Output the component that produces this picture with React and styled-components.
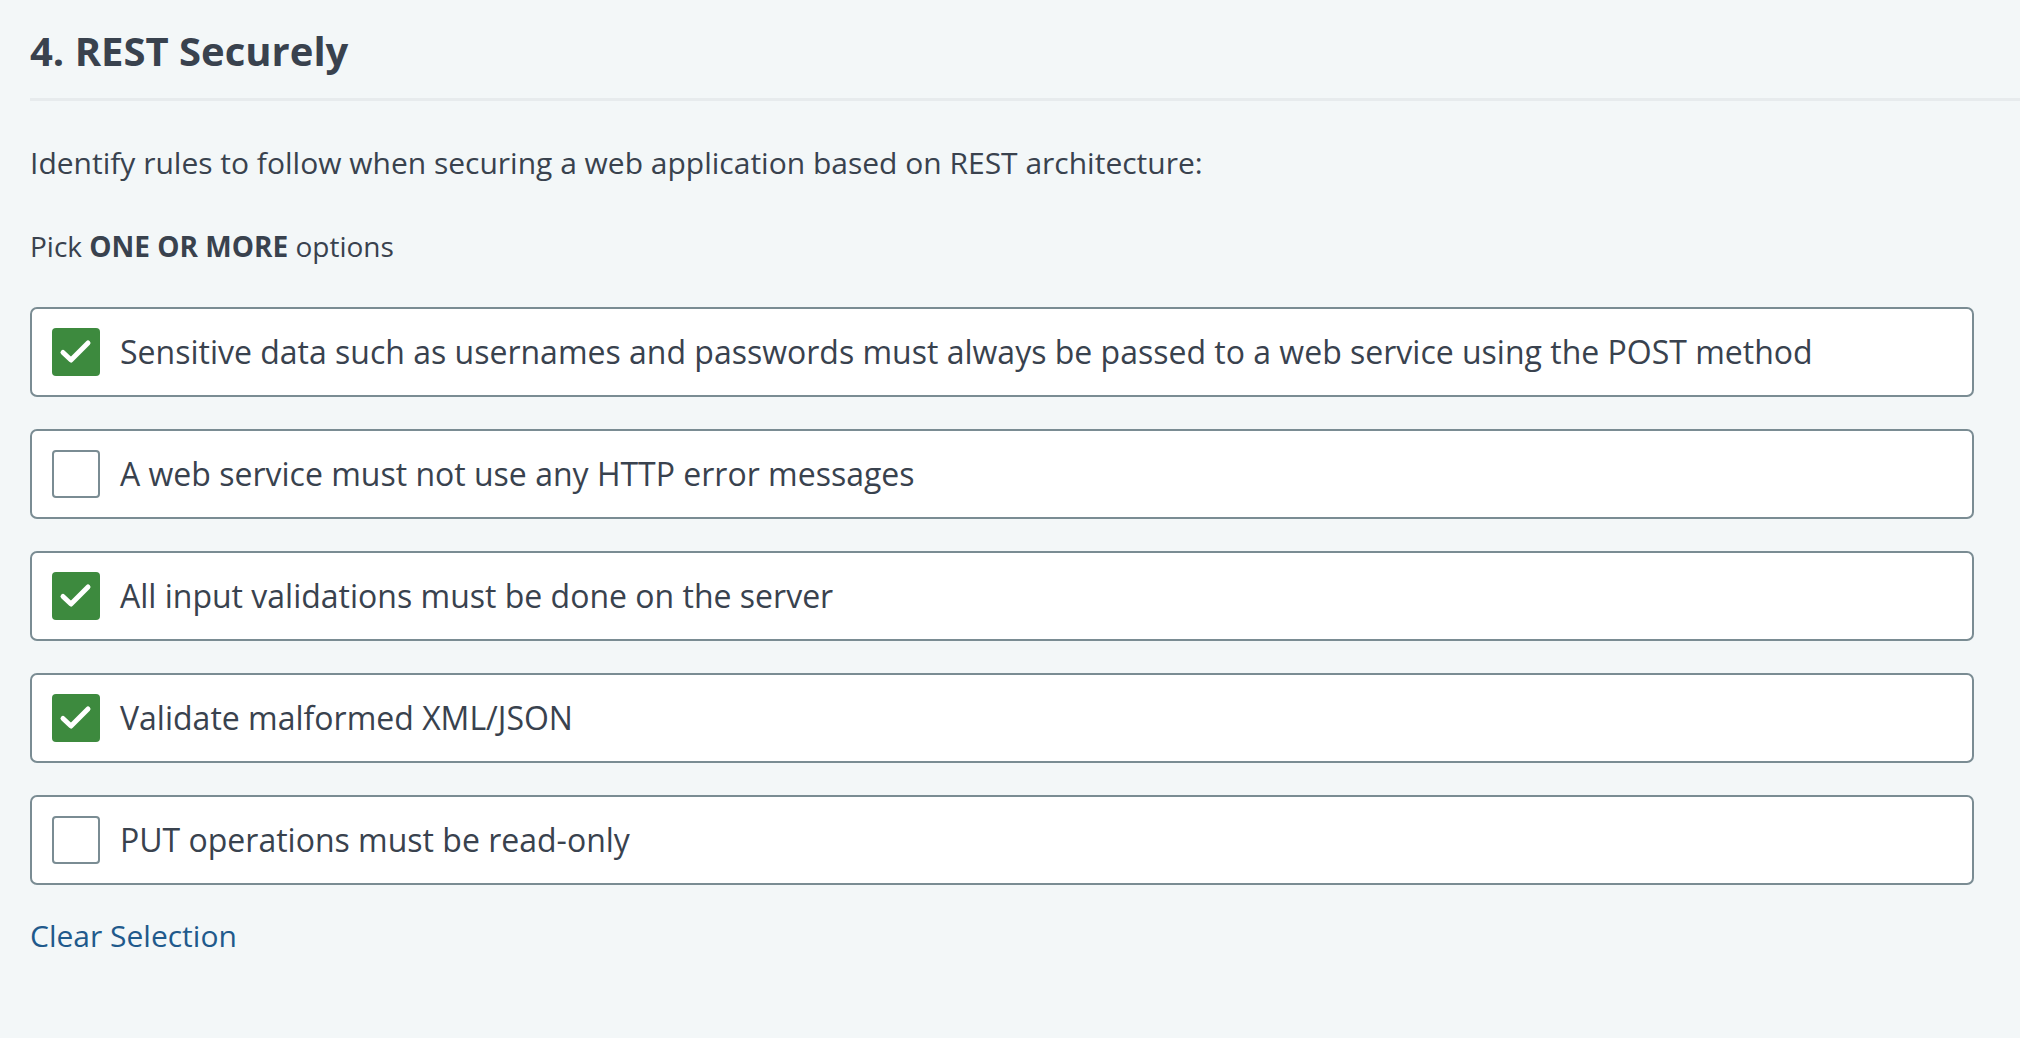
import React, { useState } from 'react';
import styled, { createGlobalStyle } from 'styled-components';

const GlobalStyle = createGlobalStyle`
  html, body {
    margin: 0;
    padding: 0;
    background: #f3f7f8;
  }
  body {
    font-family: "Open Sans", "Noto Sans", sans-serif;
    color: #39424e;
  }
`;

const options = [
  { id: 1, label: 'Sensitive data such as usernames and passwords must always be passed to a web service using the POST method', checked: true },
  { id: 2, label: 'A web service must not use any HTTP error messages', checked: false },
  { id: 3, label: 'All input validations must be done on the server', checked: true },
  { id: 4, label: 'Validate malformed XML/JSON', checked: true },
  { id: 5, label: 'PUT operations must be read-only', checked: false },
];

const CheckMark = () => (
  <svg width="48" height="48" viewBox="0 0 48 48">
    <path d="M11 24.5 L19 32 L36 15" fill="none" stroke="#fff" strokeWidth="5" strokeLinecap="round" strokeLinejoin="round" />
  </svg>
);

const App = () => {
  const [selected, setSelected] = useState(options.filter(o => o.checked).map(o => o.id));

  const toggle = (id) => {
    setSelected(s => s.includes(id) ? s.filter(x => x !== id) : [...s, id]);
  };

  return (
    <Page>
      <GlobalStyle />
      <Header>
        <Title>4. REST Securely</Title>
      </Header>
      <Body>
        <Question>Identify rules to follow when securing a web application based on REST architecture:</Question>
        <Hint>Pick <strong>ONE OR MORE</strong> options</Hint>
        <OptionList>
          {options.map(o => {
            const on = selected.includes(o.id);
            return (
              <Option key={o.id} onClick={() => toggle(o.id)}>
                <Box $checked={on}>{on && <CheckMark />}</Box>
                <Label>{o.label}</Label>
              </Option>
            );
          })}
        </OptionList>
        <ClearLink onClick={() => setSelected([])}>Clear Selection</ClearLink>
      </Body>
    </Page>
  );
};

export default App;

const Page = styled.div`
  min-height: 1038px;
  padding-left: 30px;
  box-sizing: border-box;
`;

const Header = styled.div`
  padding: 26px 0 22px;
  border-bottom: 3px solid #e7ebed;
`;

const Title = styled.h1`
  margin: 0;
  font-size: 40px;
  line-height: 50px;
  font-weight: 700;
  color: #39424e;
`;

const Body = styled.div`
  padding: 41px 46px 0 0;
`;

const Question = styled.p`
  margin: 0 0 41px;
  font-size: 30px;
  line-height: 42px;
`;

const Hint = styled.p`
  margin: 0 0 40px;
  font-size: 28px;
  line-height: 42px;

  strong {
    font-weight: 700;
  }
`;

const OptionList = styled.div`
  display: flex;
  flex-direction: column;
  gap: 32px;
`;

const Option = styled.label`
  display: flex;
  align-items: center;
  gap: 20px;
  padding: 19px 20px;
  background: #fff;
  border: 2px solid #7a8c93;
  border-radius: 7px;
  cursor: pointer;
`;

const Box = styled.span`
  flex: none;
  width: 48px;
  height: 48px;
  box-sizing: border-box;
  border-radius: 4px;
  display: flex;
  background: ${p => (p.$checked ? '#3d8a3e' : '#fff')};
  border: ${p => (p.$checked ? 'none' : '2px solid #7a8c93')};
`;

const Label = styled.span`
  font-size: 32px;
  line-height: 48px;
  color: #39424e;
`;

const ClearLink = styled.a`
  display: inline-block;
  margin-top: 30px;
  font-size: 30px;
  line-height: 42px;
  color: #1f5a8c;
  cursor: pointer;
`;
